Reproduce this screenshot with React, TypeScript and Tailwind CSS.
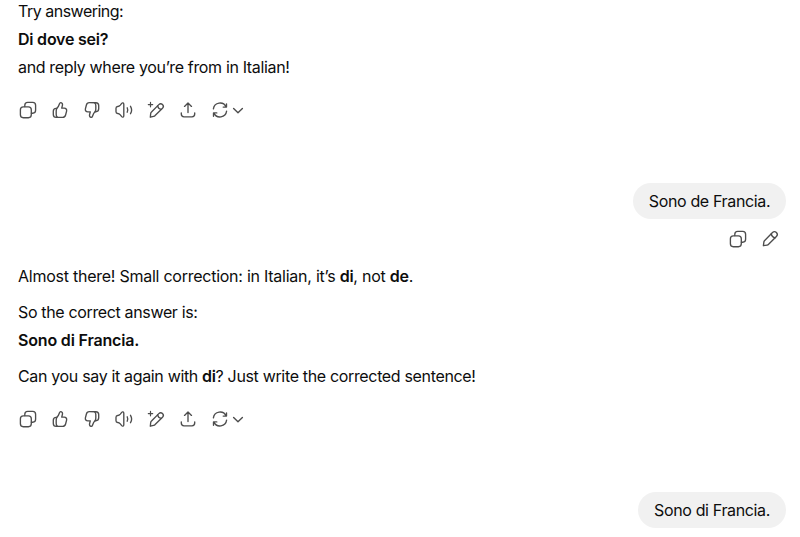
import type { ReactNode } from 'react';

const Icon = ({ children }: { children: ReactNode }) => (
    <svg
        viewBox="0 0 20 20"
        fill="none"
        stroke="currentColor"
        strokeWidth="1.35"
        strokeLinecap="round"
        strokeLinejoin="round"
        className="h-5 w-5 shrink-0"
    >
        {children}
    </svg>
);

const CopyIcon = () => (
    <Icon>
        <rect x="2.4" y="6.8" width="10.9" height="10.9" rx="2.9" />
        <path d="M6.8 6.6V5.3a2.9 2.9 0 0 1 2.9-2.9h5a2.9 2.9 0 0 1 2.9 2.9v5a2.9 2.9 0 0 1-2.9 2.9h-1.3" />
    </Icon>
);

const ThumbShape = () => (
    <>
        <path d="M6.9 8.3c1.3-1 2-2.6 2.6-4.5.3-.9.8-1.3 1.4-1.2 1.3.2 1.9 1.5 1.5 2.9l-.7 2.6h2.5c1.7 0 2.8 1.4 2.4 3l-1 3.9a3 3 0 0 1-2.9 2.3H6.2c-1.7 0-2.9-1.3-2.9-2.9v-3.2c0-1.6 1.2-2.9 2.9-2.9h.7Z" />
        <path d="M6.9 8.3c-.5.8-.7 1.7-.7 2.7v3.4c0 1.1.4 2.2 1.2 2.9" />
    </>
);

const ThumbUpIcon = () => (
    <Icon>
        <ThumbShape />
    </Icon>
);

const ThumbDownIcon = () => (
    <Icon>
        <g transform="rotate(180 10 10)">
            <ThumbShape />
        </g>
    </Icon>
);

const SpeakerIcon = () => (
    <Icon>
        <path d="M2 8.3c0-1 .7-1.7 1.7-1.8 1.1-.1 1.8-.5 2.6-1.4l1.4-1.7c.8-.9 2.1-.5 2.1.8v11.6c0 1.3-1.3 1.7-2.1.8l-1.4-1.7c-.8-.9-1.5-1.3-2.6-1.4-1-.1-1.7-.8-1.7-1.8Z" />
        <path d="M13.2 7.8c.7 1.4.7 3 0 4.4M16.5 6.3c1.4 2.3 1.4 5.1 0 7.4" />
    </Icon>
);

const SparklePencilIcon = () => (
    <Icon>
        <path d="M4.5 2.4v4.4M2.3 4.6h4.4" strokeWidth="1.2" />
        <path d="m4.3 17.2.4-3.7c.1-.6.3-1.1.8-1.5l7.3-7.4a2.6 2.6 0 0 1 3.7 3.7l-7.4 7.3c-.4.5-.9.7-1.5.8Z" />
        <path d="M11.6 5.8c.4 1.9 1.7 3.2 3.6 3.6" />
    </Icon>
);

const PencilIcon = () => (
    <Icon>
        <path d="m3.4 16.7.5-3.8c.1-.6.4-1.1.8-1.5l7.8-7.8a2.7 2.7 0 0 1 3.9 3.9l-7.8 7.8c-.4.4-.9.7-1.5.8Z" />
        <path d="M11.2 4.9c.4 2 1.9 3.5 3.9 3.9" />
    </Icon>
);

const ShareIcon = () => (
    <Icon>
        <path d="M10 12.6V3M6.5 6.4 10 2.9l3.5 3.5M3.3 12.8v1.3c0 1.6 1.2 2.7 2.7 2.7h8c1.5 0 2.7-1.1 2.7-2.7v-1.3" />
    </Icon>
);

const RetryIcon = () => (
    <Icon>
        <path d="M3.4 8.8a6.7 6.7 0 0 1 12.7-1.9M16.5 3.8v3.3h-3.3M16.6 11.2a6.7 6.7 0 0 1-12.7 1.9M3.5 16.2v-3.3h3.3" />
    </Icon>
);

const actions = [CopyIcon, ThumbUpIcon, ThumbDownIcon, SpeakerIcon, SparklePencilIcon, ShareIcon];

const MessageActions = () => (
    <div className="-ml-1.5 flex h-8 items-center text-[#4d4d4d]">
        {actions.map((ActionIcon, index) => (
            <button key={index} className="flex h-8 w-8 items-center justify-center">
                <ActionIcon />
            </button>
        ))}
        <button className="flex h-8 items-center pl-1.5">
            <RetryIcon />
            <svg
                viewBox="0 0 16 16"
                fill="none"
                stroke="currentColor"
                strokeWidth="1.4"
                strokeLinecap="round"
                strokeLinejoin="round"
                className="h-4 w-4"
            >
                <path d="m3.6 6.6 4.4 4.2 4.4-4.2" />
            </svg>
        </button>
    </div>
);

const UserBubble = ({ className, children }: { className: string; children: ReactNode }) => (
    <div className={`flex h-9 items-center justify-center rounded-[18px] bg-[#f1f1f1] tracking-[-0.36px] whitespace-nowrap ${className}`}>
        {children}
    </div>
);

export default function App() {
    return (
        <main className="h-[537px] overflow-hidden bg-white pr-3.5 pl-[18px] font-['Inter',sans-serif] text-base leading-7 tracking-[-0.35px] text-[#0d0d0d]">
            <div className="-mt-[3px]">
                <p className="tracking-[-0.5px]">Try answering:</p>
                <p className="font-semibold tracking-[-0.22px]">Di dove sei?</p>
                <p>and reply where you’re from in Italian!</p>
            </div>
            <div className="mt-[13px]">
                <MessageActions />
            </div>

            <div className="mt-[57px] flex flex-col items-end">
                <UserBubble className="w-[153px]">Sono de Francia.</UserBubble>
                <div className="mt-1 flex text-[#4d4d4d]">
                    <button className="flex h-8 w-8 items-center justify-center">
                        <CopyIcon />
                    </button>
                    <button className="flex h-8 w-8 items-center justify-center">
                        <PencilIcon />
                    </button>
                </div>
            </div>

            <div className="mt-[7px] flex flex-col gap-2">
                <p className="tracking-[-0.25px]">Almost there! Small correction: in Italian, it’s <strong className="font-semibold">di</strong>, not <strong className="font-semibold">de</strong>.</p>
                <div>
                    <p>So the correct answer is:</p>
                    <p className="font-semibold tracking-[-0.17px]">Sono di Francia.</p>
                </div>
                <p className="tracking-[-0.34px]">Can you say it again with <strong className="font-semibold">di</strong>? Just write the corrected sentence!</p>
            </div>
            <div className="mt-[13px]">
                <MessageActions />
            </div>

            <div className="mt-[57px] flex justify-end">
                <UserBubble className="w-[148px]">Sono di Francia.</UserBubble>
            </div>
        </main>
    );
}
